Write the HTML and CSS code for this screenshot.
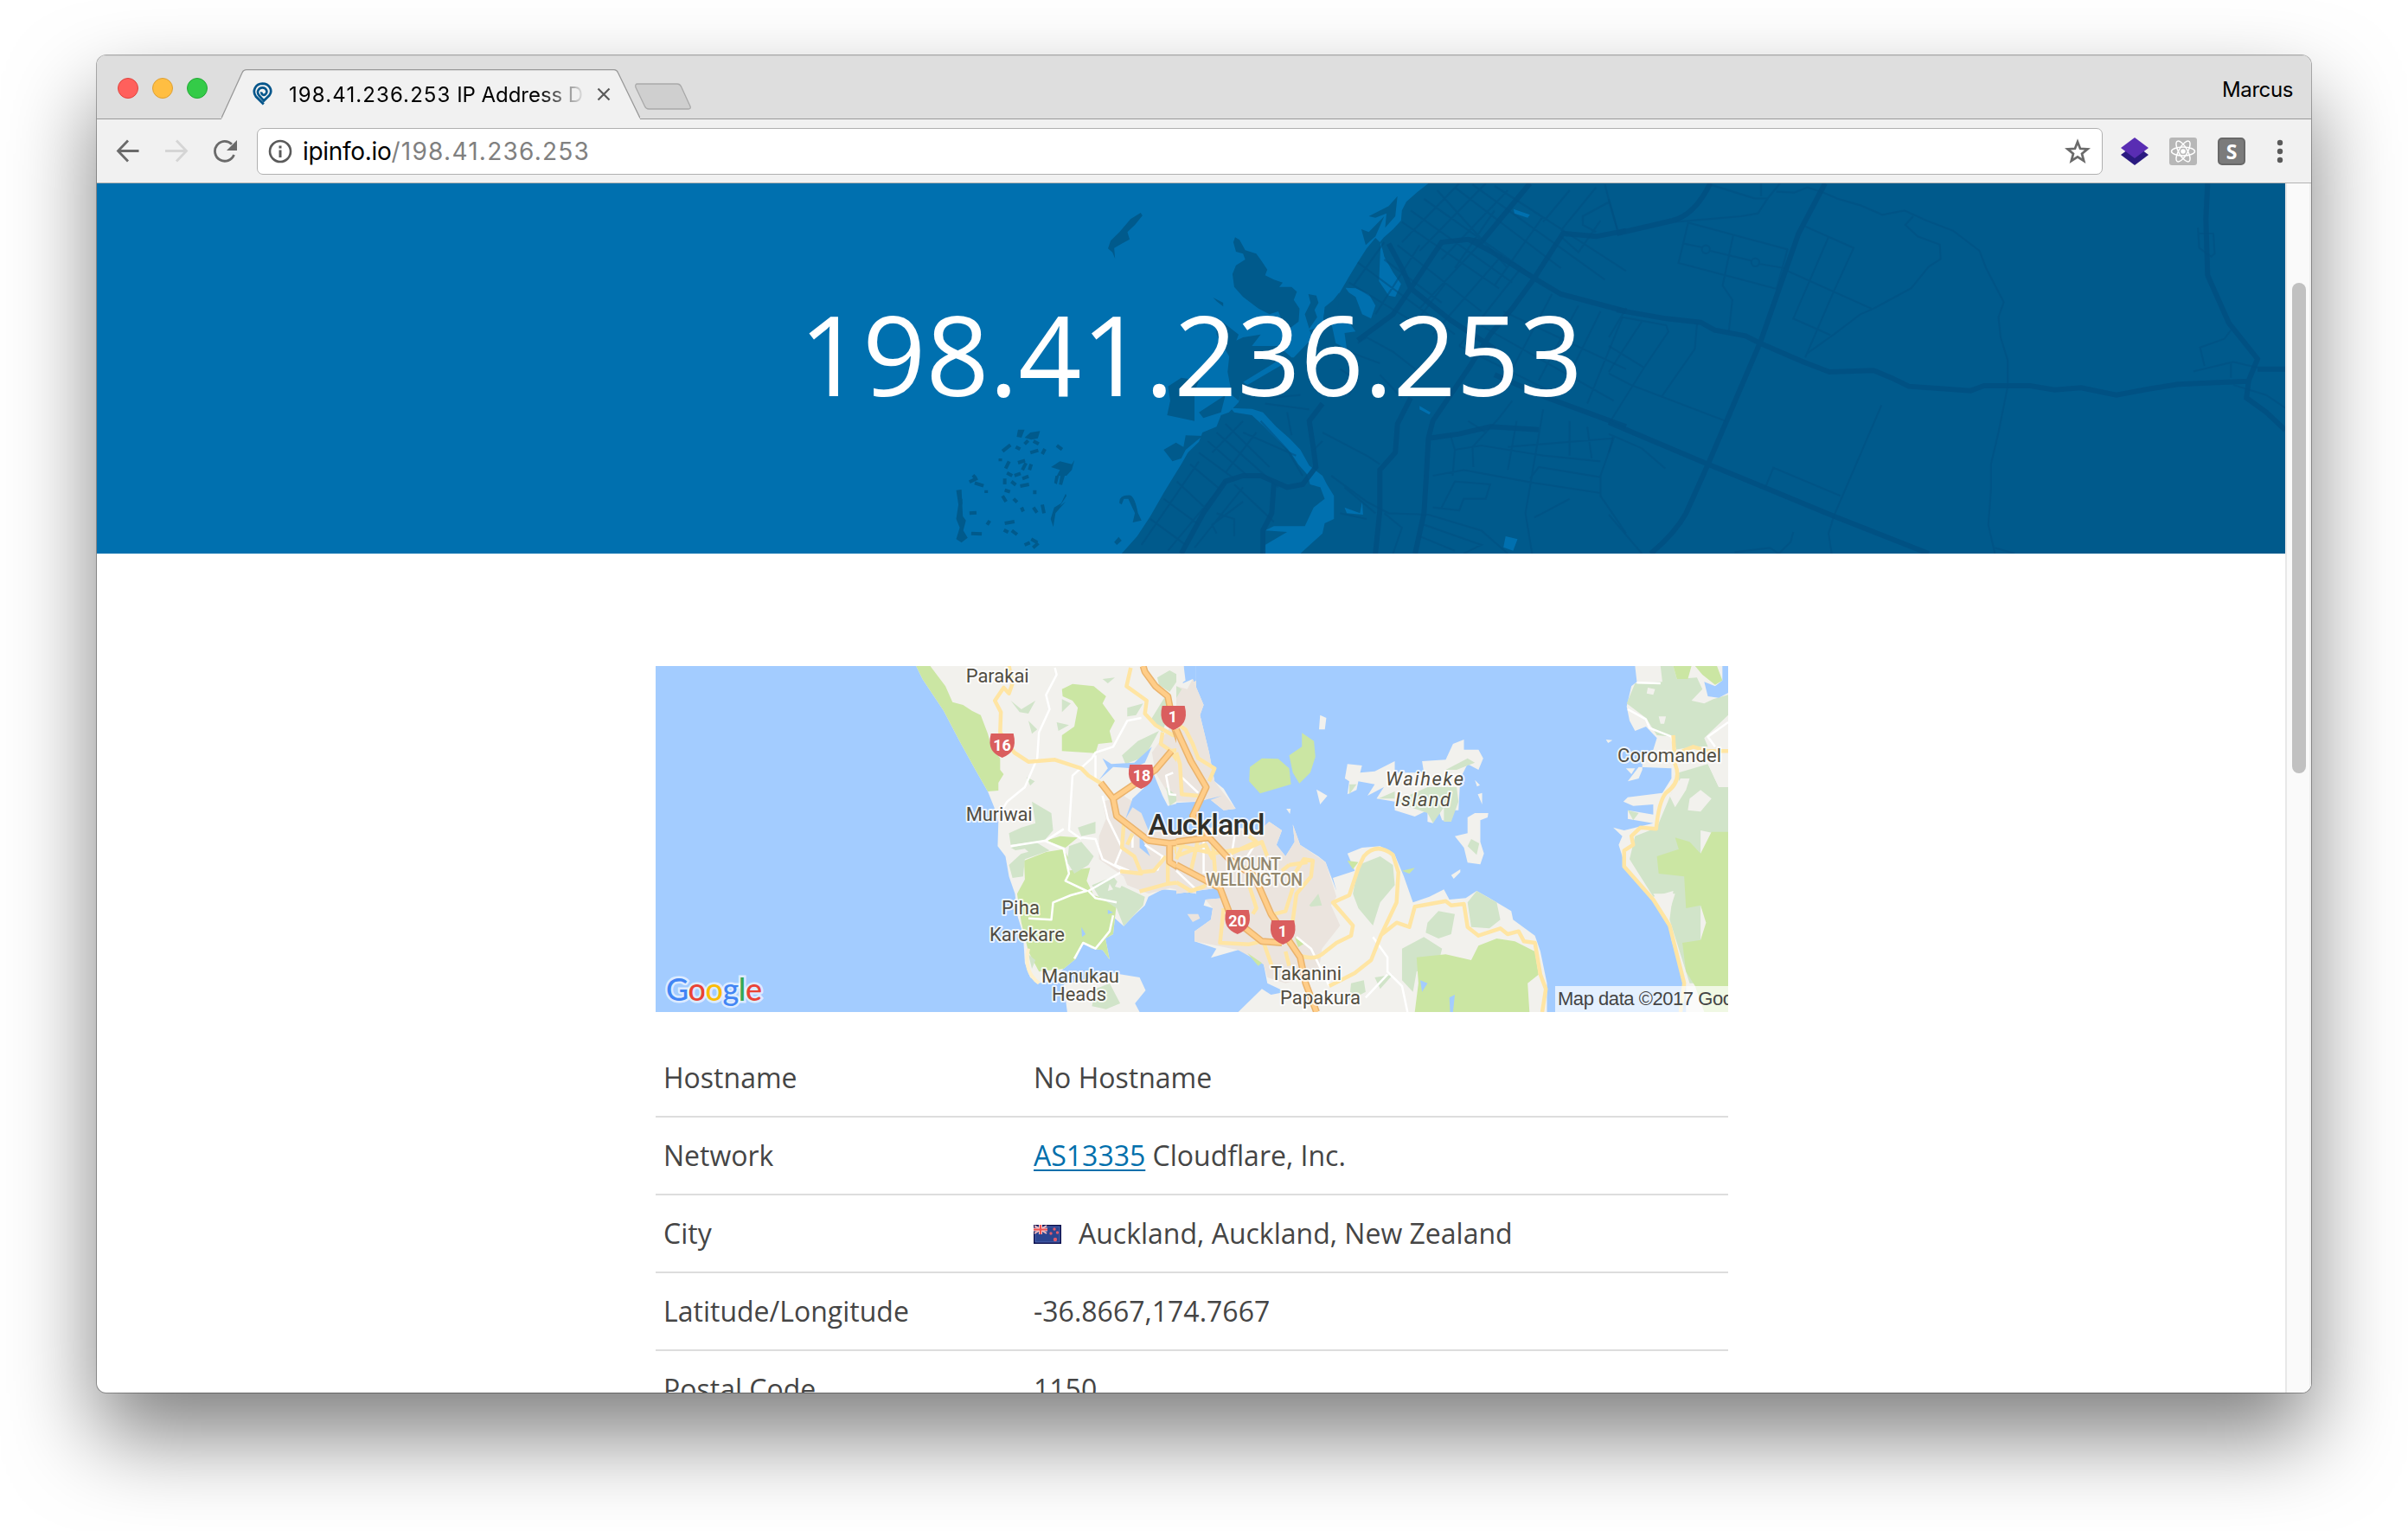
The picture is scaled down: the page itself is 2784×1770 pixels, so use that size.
FILE: index.html
```html
<!DOCTYPE html>
<html lang="en">
<head>
<meta charset="utf-8">
<title>198.41.236.253 IP Address Details</title>
<link rel="stylesheet" href="styles.css">
</head>
<body>
<div class="window">
  <header class="tabstrip">
    <div class="lights"><span class="light red"></span><span class="light amber"></span><span class="light green"></span></div>
    <div class="tab">
      <svg class="tab-shape" width="484" height="58" viewBox="0 0 484 58"><path d="M0 57.5 24 4Q25.500 .7 29 .7H454Q457 .7 458.500 4L484 57.500V58H0Z" fill="#f1f1f1"/><path d="M0 56.500 24 4Q25.500 .7 29 .7H454Q457 .7 458.500 4L484 56.500" fill="none" stroke="#999" stroke-width="1.300"/></svg>
      <svg class="favicon" width="24" height="28" viewBox="0 0 24 28" fill="none" stroke="#05568b" stroke-width="2.700"><path d="M12.800 25.500 3.800 16.500C-.6 10.500 3 1.900 11.400 1.700 19.500 1.700 23.600 9.500 19.600 15L13 21.500 7.600 15.500C3.900 10.700 7.500 6.200 11.500 6.300 16 6.400 18 11.500 14.700 14.200 12.700 15.700 9.800 14 10.400 11.400"/></svg>
      <span class="tab-title"><span class="digits">198.41.236.253</span> IP Address D</span>
      <svg class="close" width="16" height="16" viewBox="0 0 16 16"><path d="M1.500 1.500 14.500 14.500M14.500 1.500 1.500 14.500" stroke="#5a5a5a" stroke-width="2.200"/></svg>
    </div>
    <svg class="newtab" width="68" height="34" viewBox="0 0 68 34"><path d="M4 2H50Q53 2 54.500 5L65 28Q66 31 63 31H17Q14 31 12.500 28L2 6Q1 2 4 2Z" fill="#cfcfcf" stroke="#a9a9a9" stroke-width="1.300"/></svg>
    <span class="profile">Marcus</span>
  </header>
  <nav class="toolbar">
    <svg class="nav-icons" width="150" height="32" viewBox="130 158 150 32" fill="none" stroke="#6a6a6a" stroke-width="2.800">
      <path d="M160.500 173.500H137M148 161.500 136.500 173.500 148 185.500"/>
      <path d="M191 173.500H215M204 161.500 215.500 173.500 204 185.500" stroke="#d5d5d5"/>
      <path d="M270.500 178A11.400 11.400 0 1 1 268 165.800"/>
      <path d="M274 161V173H262Z" fill="#6a6a6a" stroke="none"/>
    </svg>
    <div class="omnibox">
      <svg width="28" height="28" viewBox="0 0 28 28"><circle cx="14" cy="14" r="12" fill="none" stroke="#5a5a5a" stroke-width="2.600"/><path d="M12.500 7.500h3v3h-3zM12.500 12.500h3v8.500h-3z" fill="#5a5a5a"/></svg>
      <span class="url"><b>ipinfo.io</b><span class="digits">/198.41.236.253</span></span>
      <svg width="30" height="30" viewBox="0 0 30 30"><path d="M15 4 18 11.800 26.500 12.300 20 17.700 22.200 26 15 21.300 7.800 26 10 17.700 3.500 12.300 12 11.800Z" fill="none" stroke="#6a6a6a" stroke-width="2.700"/></svg>
    </div>
    <div class="extensions">
      <svg width="32" height="32" viewBox="0 0 32 32"><path d="M0 20 16 8 32 20 16 32Z" fill="#2a1a80"/><path d="M0 12 16 0 32 12 16 24Z" fill="#592db3"/></svg>
      <svg width="32" height="32" viewBox="0 0 32 32"><rect width="32" height="32" rx="3" fill="#b7b7b7"/><g fill="none" stroke="#fff" stroke-width="1.500"><ellipse cx="16" cy="16" rx="13.500" ry="5"/><ellipse cx="16" cy="16" rx="13.500" ry="5" transform="rotate(60 16 16)"/><ellipse cx="16" cy="16" rx="13.500" ry="5" transform="rotate(120 16 16)"/></g><circle cx="16" cy="16" r="2.800" fill="#fff"/></svg>
      <span class="ext-s">S</span>
      <svg width="8" height="28" viewBox="0 0 8 28" fill="#5a5a5a"><circle cx="4" cy="4" r="3.200"/><circle cx="4" cy="14" r="3.200"/><circle cx="4" cy="24" r="3.200"/></svg>
    </div>
  </nav>
  <div class="viewport">
    <main class="page">
      <section class="hero">
        <svg class="hero-map" viewBox="112 212 2530 428" width="2530" height="428">
          <g transform="matrix(.5102 0 0 .33333 1080 200)">
            <path d="M1120 36 1095 66 1070 100 1060 130 1058 165 1040 195 1018 225 1010 240 1000 225 980 262 960 310 940 360 925 400 918 418 905 440 885 475 880 530 850 545 860 570 840 600 815 640 800 640 775 660 750 690 720 725 700 735 690 795 668 830 650 840 640 880 608 900 600 932 575 970 560 1010 540 1060 520 1110 490 1190 460 1260 425 1320H3100V36Z" fill="#005a8c"/>
            <path fill="#005a8c" d="M468 138 472 148 455 180 438 205 443 230 425 245 408 260 410 297 404 275 394 262 400 235 420 205 445 160ZM682 223 692 232 705 268 730 280 742 305 755 335 750 355 770 370 790 380 782 395 810 395 822 412 815 440 828 470 826 515 805 540 790 520 780 480 760 490 735 470 700 430 680 395 676 350 684 320 705 300 700 280 684 273 678 240ZM632 432 655 450 655 463 640 445ZM848 420 866 425 871 450 862 475 868 500 850 540 840 490 853 450ZM918 415 905 440 885 465 880 540 895 520 915 470ZM1050 80 1045 150 1022 190 1025 140 1000 155 985 150 1030 115ZM968 195 985 205 1020 150 1000 220 978 250ZM530 740 560 710 600 720 590 760 590 860 528 840 535 790ZM672 590 700 570 740 560 720 600 780 600 810 640 730 715 700 740 690 790 675 770 665 690ZM640 500 690 560 670 640 640 560ZM548 935 565 950 570 910 608 912 570 960 560 990 540 1000 520 960ZM600 830 660 770 650 830 610 850ZM420 1145 Q418 1115 445 1118 Q455 1125 462 1180 L470 1205 450 1212 455 1180 440 1130 430 1130 425 1150ZM408 1280 418 1262 425 1275 414 1290ZM50 1100 62 1098 65 1190 72 1205 66 1240 76 1265 62 1282 50 1270 58 1230 50 1200 55 1150ZM187 915 190 890 205 890 198 918ZM205 918 218 900 240 895 235 920 220 925ZM265 1020 285 1000 312 1010 318 995 312 1030 300 1050 278 1050 285 1030ZM275 1050 283 1050 278 1080 272 1075ZM286 1050 296 1050 290 1082 283 1080ZM298 1112 300 1120 285 1155 298 1140 275 1180 270 1228 264 1200 272 1160 288 1145Z"/>
            <path d="M155 965l18-22M185 950l10 8M205 940l8-12M225 930l12 10M218 970l18-8M245 975l6-18M278 945l12 14M170 1000l-8 25M190 1005l16-8M200 1030l8-24M220 1010l-4 20M165 1040l12 10M182 1050l14-8M150 1000v-10M80 1072l18-14M88 1048l6 10M92 1075l20 10M118 1100v10M160 1060v20M175 1070l10 12M200 1060l14-8M215 1080l-20 6M160 1100l12 6M155 1120l8 20M180 1130l8 12M198 1160l4 14M228 1100v14M225 1160l8 18M245 1150l4 30M80 1180l16-2M84 1250l24 2M120 1220l6-14M160 1215l22-6M158 1238l10 8M176 1240l12 14M205 1290l12-8M220 1270l14 12M224 1300l12-16M60 1130v20" fill="none" stroke="#005a8c" stroke-width="4" vector-effect="non-scaling-stroke"/>
            <g fill="#0070af"><path d="M1012 240 1020 290 1040 345 1058 385 1045 430 1030 425 1008 375ZM932 398 955 400 985 420 1000 460 990 505 970 490 955 430 940 415ZM900 520 930 495 955 550 930 555 935 610 910 590ZM672 815 720 818 745 830 775 880 805 920 830 960 850 1015 880 1050 890 1080 906 1120 906 1200 885 1215 880 1250 855 1285 830 1320 745 1320 750 1290 800 1245 750 1240 770 1225 840 1225 860 1160 885 1130 875 1090 852 1080 845 1045 825 1010 808 970 780 930 745 875 720 840 680 830ZM700 725 780 650 800 655 710 735ZM1313 125 1350 145 1345 155 1315 140ZM1100 808 1125 830 1122 838 1100 820ZM1295 1260 1322 1270 1312 1310 1290 1298ZM930 1160 965 1180 970 1140 972 1185 935 1180Z"/></g>
            <g class="streets minor"><path d="M1140 60 1300 330M1180 50 1420 330M1220 40 1520 370M1270 45 1568 340M1110 90 1350 350M1080 130 1310 380M1060 170 1280 400M1050 250 1240 480M1020 300 1150 450M960 310 1180 560M940 380 1090 520M1190 36 1060 240M1250 36 1100 270M1300 60 1150 300M1240 240 1100 470M1290 280 1130 560M1330 330 1190 600M1270 130 1180 330M1380 150 1270 390M1440 60 1380 170M1500 50 1420 200M1020 240 950 390M1100 250 1000 490M1160 380 1090 520M1400 420 1310 680M1460 460 1370 720M1510 480 1420 760M1560 500 1480 800M1290 480 1568 680M1240 530 1540 790M1190 600 1400 760M1420 220 1460 275 1510 165M1520 40 1530 100 1470 150 1470 180 1500 205M1530 100 1548 195M960 590 980 570 1040 620 1090 680M940 620 1010 660M920 680 960 720 940 770M1010 700 1060 780M880 900 980 980 1010 1010M860 960 880 930M1380 820 1340 1180 1355 1320M1320 860 1300 1030M1250 900 1280 850 1310 790M1210 860 1250 900 1220 950 1222 1020M1170 910 1180 960 1175 1050M1180 960 1240 945 1380 980 1510 1000M1300 950 1540 920 1510 1050 1510 1120 1568 1250M1350 1060 1370 1020 1510 1055M1440 860 1440 980M1480 880 1490 990M1130 1050 1200 1030 1360 1075 1510 1110M1130 1160 1190 1170 1200 1130 1250 1130 1260 1080 1180 1070 1150 1160M1360 1195 1440 1130M900 1050 980 1140 1030 1180 1120 1185 1240 1240 1300 1320M1110 1220 1240 1290 1200 1320M1100 1260 1180 1310M930 1090 1000 1180M920 1180 980 1200M1020 1180 1060 1230 1040 1320M660 870 760 1020M640 900 780 1090M620 930 710 1050M600 970 680 1060M580 1010 650 1100M550 1070 620 1170M520 1130 600 1220M490 1200 570 1290M740 860 800 960 835 1050M700 860 630 970M730 900 660 1040M800 830 810 910M750 800 850 820M760 780 830 770M700 900 820 980M680 1080 770 1210M700 1140 630 1220 640 1250M640 1180 680 1200 680 1260M600 1000 470 1290M660 1070 530 1310M700 1090 590 1300"/></g>
            <g class="streets major"><path d="M1350 36 1240 240 1210 230 1150 240 1080 400 1040 490 960 580M1210 230 1260 270 1360 365 1420 420 1568 480M1030 245 1060 330 1080 400 1170 510 1270 610M1360 365 1310 470 1260 560 1210 680 1170 770 1130 860 1120 920 1115 1060 1110 1180 1090 1320M1568 200 1500 220 1425 210 1360 365M1270 700 1390 780 1568 880M1080 780 1050 870 1045 970 1010 1030 1010 1170 1000 1320M880 800 850 860 860 960 865 1020 835 1080 800 1090 740 1050 700 1050 660 1070 610 1180 560 1320M770 1075 765 1180 745 1240 745 1320M1120 920 1190 905 1260 880 1370 890"/></g>
          </g>
          <g transform="matrix(.5102 0 0 .33333 1860 200)">
            <g class="streets major"><path d="M18 210 145 165Q195 145 230 36M18 475 130 505 208 518 240 545 310 565 345 592 440 655 500 690 600 685 640 710 680 740 820 755 850 738 955 738 1010 752 1070 745 1150 770 1220 750 1290 733 1450 722M490 36 430 210 345 580 225 1010 175 1180Q150 1250 95 1320M0 865 225 1010 510 1190 725 1320M1357 36 1353 160 1357 355 1405 520 1470 645 1450 720 1445 780 1490 830 1533 892M1470 680H1533"/></g>
            <g class="streets minor"><path d="M230 40 330 88 360 88 388 36M345 36V80M360 88 338 140 300 150 150 170M380 65 420 68 450 50 482 65 520 90 570 112 620 145 670 130 720 165 780 200 840 270 855 330 895 448 883 500 888 570 904 650 904 740 883 900 866 1010 866 1100 860 1220 875 1320M690 150 672 180 700 220 750 248 752 298 725 325 685 400 600 470 570 490 510 560 450 625M445 185 555 260 510 410 445 640M498 222 418 505 502 562M405 340 595 470M180 172 405 265 380 402 158 312ZM282 215 258 390 280 440 272 550M170 245 212 258M230 270 325 305M340 315 398 330M0 90 20 200M40 468 0 570M75 515 0 690M30 500 130 528 135 550 80 675 0 870M200 520 195 610 120 775M0 600 80 675M0 695 50 735 265 860M0 905 75 955 128 1025M10 910 0 970M0 1185 75 1320M618 805 510 1190 498 1250 505 1320M355 1090 373 1022 525 1120M285 1315 365 1300 385 1320 412 1280 418 1245M875 1300 920 1320M1335 190 1338 260 1365 290 1373 280 1370 210 1338 210M1410 545 1395 575 1340 605 1350 670M1325 688 1415 655 1470 675M1410 660V710M1415 735 1490 770 1533 815"/><ellipse cx="220" cy="265" rx="9" ry="14"/><ellipse cx="332" cy="310" rx="9" ry="14"/></g>
          </g>
        </svg>
        <h1>198.41.236.253</h1>
      </section>
      <section class="details">
        <svg class="location-map" width="1240" height="400" viewBox="758 770 1240 400">
          <rect x="758" y="770" width="1240" height="400" fill="#a3ccff"/>
          <g transform="matrix(.40816 0 0 .33333 740 760)">
            <path class="land" d="M782 30 800 75 860 185 905 290 950 390 985 465 1003 520 1015 570 1013 655 1035 690 1045 760 1062 820 1070 900 1085 960 1090 1060 1105 1110 1130 1130 1165 1120 1200 1080 1235 1045 1255 990 1280 1010 1310 1015 1330 1048 1318 975 1340 960 1345 905 1370 932 1395 900 1430 860 1440 830 1480 805 1530 810 1575 820V30ZM1200 1135 1340 1095 1415 1110 1432 1155 1402 1200 1415 1230H1210Z"/>
            <path class="town" d="M1568 90 1535 130 1530 200 1490 260 1450 330 1460 400 1500 480H1575V70ZM1370 480 1310 500 1320 560 1300 620 1300 700 1370 760 1380 790 1440 820 1500 800 1575 820V570L1420 520Z"/>
            <path class="park" d="M782 30H822L865 100 885 155 915 165 940 185 965 200 985 265 995 310 1020 350 1020 390 1030 405 1015 435 1015 462 985 465 950 390 905 290 860 185 800 75ZM1195 110 1225 92 1285 100 1320 135 1310 160 1345 220 1330 255 1338 295 1298 300 1290 332 1195 325V270L1230 240 1240 175 1225 150 1197 135ZM1150 635 1190 620 1240 625 1205 660ZM1088 705 1150 675 1200 665 1215 700 1210 740 1275 730 1265 775 1285 825 1350 850 1345 905 1340 960 1318 975 1330 1048 1310 1015 1280 1010 1255 990 1235 1045 1200 1080 1130 1090 1100 1020 1080 920 1068 820 1090 770Z"/>
            <path class="bush" d="M1465 70 1500 45 1530 65 1500 120 1470 95ZM1485 140 1505 160 1480 260 1445 220ZM1050 150 1080 180 1120 150 1100 195 1075 190ZM1195 145 1220 160 1195 190ZM1180 225 1215 235 1185 255ZM1100 220 1125 250 1110 265ZM1310 75 1345 70 1325 90ZM1380 175 1425 160 1405 200 1380 205ZM1470 255 1430 345 1375 370 1365 340 1410 290ZM1095 415 1118 430 1105 445ZM1110 500 1165 540 1170 600 1145 635 1050 650 1045 610 1080 590 1120 575ZM1050 660 1120 640 1160 670 1090 700 1085 760 1055 765 1045 720 1080 680ZM1240 590 1290 570 1290 610 1250 620ZM1215 655 1250 640 1285 690 1270 720 1230 750 1210 710ZM1280 790 1340 760 1360 790 1430 830 1425 860 1370 932 1350 870 1300 830ZM1490 450 1530 490 1500 515ZM1290 1150 1330 1130 1360 1200 1320 1220 1280 1210ZM1100 1030 1120 1050 1110 1080Z"/>
            <path class="land" d="M1060 670l30-6 10 10-35 12ZM1355 770l15 10-10 20-15-5ZM1330 785l10 20-15 5Z"/>
            <path class="sea" d="M1520 100 1545 80 1540 30H1575V80L1535 110ZM1455 405 1480 480 1495 515 1575 490V615L1470 600 1440 600 1420 540 1395 520 1375 560 1395 490 1430 450ZM1415 610 1445 690 1415 660ZM1300 425 1325 385 1310 350 1335 370 1400 365 1450 310 1430 365 1395 385 1340 380ZM1325 875 1340 885 1325 890ZM1250 935 1262 960 1252 970Z"/>
            <path class="road-w" d="M1175 36 1180 60 1150 130 1160 180 1130 260 1125 350 1090 450 1040 500 1020 540M1420 210 1380 220 1340 310 1290 330 1280 350 1225 410 1215 600 1250 630M1290 340 1290 430M1050 655 1150 635 1200 595M1145 635 1200 665 1215 750 1205 775 1265 810 1220 825 1170 850 1165 910 1100 905M1250 625 1290 630 1310 700 1370 740 1270 810 1290 835 1350 850M1310 480 1325 560 1365 660 1345 720 1385 740M1340 895 1330 950 1290 1010 1255 990 1230 1045M1510 400 1490 410 1500 475 1540 480M1395 620 1395 660M1430 650 1480 690 1465 740"/>
            <path d="M1100 1010Q1085 1090 1130 1130" fill="none" stroke="#fff0cd" stroke-width="4" vector-effect="non-scaling-stroke"/>
            <path class="road-y" d="M1045 30 1055 90 1045 125 1030 105 1005 150 1022 190 1020 260 1060 330 1100 362 1175 355 1250 385 1270 410 1310 440M1390 36 1378 100 1435 150 1430 195 1460 235 1510 270 1540 260 1560 300M1480 260 1475 300 1505 325 1550 315M1505 330 1530 370 1535 475 1570 480M1370 580 1365 660 1400 690 1420 750 1360 742M1420 745 1455 740 1490 690M1380 650 1395 610M1495 700 1495 785 1415 812M1495 785 1530 780 1550 810 1575 805M1500 640 1568 740M1515 680 1575 640"/>
            <path class="motorway-edge" d="M1425 30 1430 50 1460 100 1495 135 1510 230 1530 300 1575 400M1505 325 1460 390 1340 490M1305 435 1340 490 1350 550 1440 635 1500 645 1575 635M1500 645 1500 710 1575 765"/>
            <path class="motorway" d="M1425 30 1430 50 1460 100 1495 135 1510 230 1530 300 1575 400M1505 325 1460 390 1340 490M1305 435 1340 490 1350 550 1440 635 1500 645 1575 635M1500 645 1500 710 1575 765"/>
          </g>
          <g transform="matrix(.42091 0 0 .33333 1360 760)">
            <path class="land" d="M0 30H20L18 90 45 75 75 165 65 200 90 330 105 430 130 455 163 525 130 530 90 490 70 500 40 530 0 500ZM0 590H170L230 600 255 570 290 600 275 650 300 690 325 640 320 580 340 650 390 690 410 710 440 810 430 765 490 740 470 680 510 660 560 655 600 685 625 760 650 850 695 830 735 805 750 840 795 835 825 810 860 835 920 880 925 910 985 965 1000 1020 1018 1130V1230H170L235 1150 260 1170 300 1160 250 1130 240 1065 215 1040 170 1015 95 1042 110 1010 50 985 50 950 95 910 100 870 75 860 80 840 130 835 110 800 0 820ZM1260 30 1265 85 1250 100 1237 170 1245 220 1260 255 1290 240 1320 280 1310 320 1280 350 1280 390 1270 420 1240 430 1270 380 1360 385 1360 420 1335 470 1240 485 1228 500 1255 515 1310 510 1310 545 1240 530 1240 560 1310 575 1230 600 1200 590 1225 620 1215 650 1235 730 1310 840 1355 930 1360 980 1385 1080 1400 1140V1230H1520V30Z"/>
            <path class="town" d="M0 100 30 110 45 75 75 165 65 200 90 330 105 430 163 525 130 530 90 490 60 500H0ZM0 600H170L230 600 255 570 290 600 275 650 300 690 325 640 320 580 340 650 410 710 440 830 425 860 450 930 400 1010 390 1100 300 1130 250 1110 240 1065 170 1015 50 985 50 950 95 910 100 870 80 840 130 835 110 800 0 820ZM30 890 60 890 65 905 45 918Z"/>
            <path class="bush" d="M1262 30H1330L1335 85 1260 90 1237 160 1290 210 1320 270 1365 275 1370 320 1420 310 1460 310 1450 280 1516 200V130L1475 145 1450 160 1415 150 1445 110 1430 70 1375 75 1365 30ZM1516 430 1490 450 1460 370 1380 400 1380 440 1360 470 1330 560 1320 590 1260 620 1245 700 1265 740 1310 830 1365 810 1355 910 1390 1050 1410 1130H1440V600L1516 620ZM500 720 560 690 595 720 600 790 560 850 540 930 500 870 485 820ZM690 920 720 880 765 890 755 960 720 975 685 955ZM800 850 825 810 880 850 890 910 860 940 810 935ZM620 1010 680 970 730 1010 720 1060 660 1090 650 1160 620 1120ZM480 1130 515 1120 520 1160 475 1190ZM545 1110 595 1100 560 1150ZM365 860 390 820 400 860 370 865ZM0 100 15 110 0 140Z"/>
            <path class="land" d="M1410 490 1440 460 1470 490 1440 535 1405 530ZM1460 370 1490 330 1516 340V450H1490ZM1385 420 1410 420 1400 460 1370 520 1355 480ZM1295 105l20 5-5 20-18-5ZM1325 205l20 0-5 25-10 0ZM1310 820 1370 820 1355 880 1335 870Z"/>
            <path class="park" d="M1365 30H1415L1405 75 1375 75ZM1425 30H1485L1500 80 1480 95 1445 60ZM1516 605 1470 605 1440 680 1410 640 1370 625 1380 665 1320 690 1325 750 1395 760 1400 870 1440 860 1455 920 1440 980 1390 990 1400 1090 1425 1140 1450 1230H1516ZM660 1040 740 1030 810 1050 830 1000 880 975 930 985 985 1020 995 1100 965 1130 970 1230H655L665 1130ZM235 350 280 352 310 385 315 440 230 472 200 430 202 380ZM345 262 378 290 382 345 368 400 338 437 320 400 310 340 345 310ZM470 705 500 710 485 735ZM620 740 655 730 640 750ZM325 970 355 990 335 1005ZM195 1025 235 1060 225 1070Z"/>
            <path class="land" d="M395 200 412 210 408 250 392 250ZM385 458 415 480 395 510ZM302 525l12 0-2 18ZM470 370 510 375 505 400 545 395 600 360 600 400 680 400 675 360 740 355 760 300 790 285 790 320 830 320 843 350 830 390 800 370 780 420 775 530 750 530 755 570 730 565 720 530 705 575 690 570V530L655 552 600 530 600 500 550 490 570 450 525 480 545 440 500 430 495 460 470 475 475 430 463 420ZM820 425l14 18-8 5ZM828 475l12-5 0 40ZM800 555 820 540 857 540 855 555 835 565V640L845 680 835 718 800 712 790 660 765 620 800 610ZM755 755 780 735 780 745 762 768ZM1180 285l18 2-12 10ZM1235 385l25 0-10 20Z"/>
            <path class="bush" d="M740 390 800 350 820 365 770 390ZM690 450 770 450 775 500 755 570H735V520L705 575 690 540 600 500ZM810 630 832 645 825 685 800 655ZM555 490 600 465 600 490ZM475 440 495 440 475 475ZM1240 530 1270 540 1255 565Z"/>
            <path class="sea" d="M1450 85 1480 100 1500 80V30H1520V120L1490 140 1460 135ZM125 480 60 510 40 550 70 610 0 610V505L60 500ZM750 1180 765 1170 760 1230H752ZM670 1120 690 1130 675 1160Z"/>
            <path class="road-w" d="M1330 90 1265 88M1240 180 1290 215 1300 245 1360 275 1370 320M1516 225 1460 275 1480 310M330 970 370 1010 420 1140M540 970 580 1040 580 1090 620 1140 635 1230M580 1100 520 1180M75 630V750M190 700 220 640M150 700 160 620M10 410 60 470M0 740 50 800"/>
            <path class="road-y" d="M0 230 25 250 45 300 60 350 105 385 90 430M0 330 10 370 15 475 60 480M0 650 100 680 200 660 235 640 250 690M0 690 80 650 100 700M20 640 0 700M60 630 40 740M100 640 110 800M150 680 220 640 200 620M0 780 40 810 75 795 110 760M200 790 220 870 210 890M310 720 290 740M310 780 350 700 375 705 370 760 330 820 310 1000M310 720 360 710M320 800 300 880 270 890M130 870 120 990 200 995 235 985M240 990 265 1080M300 1020 310 1070M340 1035Q380 1050 400 1030L440 990 480 965 485 930 430 850 475 825 500 730 515 690Q550 640 595 685L610 745 605 850 560 970 535 1050 490 1095 420 1140M560 965 605 920 640 935 655 865 740 845 755 860 790 855 800 935 830 965 890 940 910 960 940 950 955 985 985 990 1000 1100 1015 1150 1005 1230M1365 270 1370 370Q1390 430 1345 470 1325 500 1318 595L1275 590 1250 620 1255 650 1230 670 1230 725 1310 840 1355 930 1395 1130 1385 1230M1390 325 1420 310 1460 325 1516 325"/>
            <path class="motorway-edge" d="M0 250 40 360 82 450 45 550 90 625 145 700 215 760 260 890 340 1040 355 1130 385 1230M0 640 90 625M0 720 120 800 150 900 235 985 290 990"/>
            <path class="motorway" d="M0 250 40 360 82 450 45 550 90 625 145 700 215 760 260 890 340 1040 355 1130 385 1230M0 640 90 625M0 720 120 800 150 900 235 985 290 990"/>
          </g>
          <g class="shields">
            <path id="shield" d="M-13-14H13Q16-2 12 5 8 11 0 14-8 11-12 5-16-2-13-14Z" transform="translate(1356.700 830)"/>
            <use href="#shield" x="-198" y="32"/><use href="#shield" x="-37.500" y="68"/><use href="#shield" x="74" y="236"/><use href="#shield" x="126.500" y="248"/>
            <g class="shield-text"><text x="1356" y="835">1</text><text x="1158.500" y="868">16</text><text x="1320" y="903">18</text><text x="1430.500" y="1071">20</text><text x="1483" y="1083">1</text></g>
          </g>
          <g class="places">
            <text x="1116.700" y="789" textLength="73">Parakai</text><text x="1116.700" y="949" textLength="77">Muriwai</text><text x="1158" y="1057" textLength="44">Piha</text><text x="1144" y="1087.500" textLength="87">Karekare</text><text x="1204" y="1135.500" textLength="90">Manukau</text><text x="1216" y="1157" textLength="63">Heads</text>
            <text x="1870" y="881" textLength="120">Coromandel</text><text x="1469" y="1133" textLength="82">Takanini</text><text x="1480" y="1161" textLength="93">Papakura</text>
            <text class="island" x="1602" y="908" textLength="90">Waiheke</text><text class="island" x="1613" y="932" textLength="64">Island</text>
            <text class="suburb" x="1418" y="1006" textLength="63">MOUNT</text><text class="suburb" x="1394" y="1024" textLength="112">WELLINGTON</text>
            <text class="city" x="1327.500" y="964.500" textLength="135">Auckland</text>
          </g>
          <text class="google" x="770" y="1157" textLength="111"><tspan fill="#4285f4">G</tspan><tspan fill="#ea4335">o</tspan><tspan fill="#fbbc05">o</tspan><tspan fill="#4285f4">g</tspan><tspan fill="#34a853">l</tspan><tspan fill="#ea4335">e</tspan></text>
          <rect x="1798" y="1140" width="200" height="30" fill="#fff" fill-opacity=".7"/>
          <text class="credit" x="1801" y="1162" textLength="203">Map data ©2017 Goo</text>
        </svg>
        <dl class="facts">
          <div class="row"><dt>Hostname</dt><dd>No Hostname</dd></div>
          <div class="row"><dt>Network</dt><dd><a href="#">AS13335</a> Cloudflare, Inc.</dd></div>
          <div class="row"><dt>City</dt><dd><svg class="flag" width="32" height="22" viewBox="0 0 32 22"><rect width="32" height="22" fill="#0b0f4d"/><rect x="2" y="2" width="28" height="18" fill="#2c4590" stroke="#5069b2"/><path d="M1 1 15 10M15 1 1 10" stroke="#f1b9bd" stroke-width="2"/><path d="M8 0V11M0 5.500H16" stroke="#f4c9cc" stroke-width="4"/><path d="M8 0V11M0 5.500H16" stroke="#ef5350" stroke-width="2"/><g fill="#e15b6b"><circle cx="24" cy="5" r="1.700"/><circle cx="20" cy="10" r="1.700"/><circle cx="27.500" cy="9" r="1.700"/><circle cx="25" cy="17" r="2.200"/></g></svg>Auckland, Auckland, New Zealand</dd></div>
          <div class="row"><dt>Latitude/Longitude</dt><dd>-36.8667,174.7667</dd></div>
          <div class="row"><dt>Postal Code</dt><dd>1150</dd></div>
        </dl>
      </section>
    </main>
    <div class="scrollbar"><div class="thumb"></div></div>
  </div>
</div>
</body>
</html>
```

FILE: styles.css
```css
* { box-sizing: border-box; }
body { margin: 0; padding: 64px 112px; height: 1770px; overflow: hidden; background: #fff; }
.window { display: flex; flex-direction: column; width: 2560px; height: 1546px; overflow: hidden; border-radius: 11px; background: #fff; box-shadow: 0 0 0 1px rgba(0,0,0,.3), 0 50px 100px rgba(0,0,0,.5); }

.tabstrip { display: flex; align-items: flex-end; height: 74px; flex: none; background: #dedede; border-bottom: 1px solid #999; box-shadow: inset 0 1px #d0d0d0; font-family: Inter, "Liberation Sans", sans-serif; color: #000; }
.lights { display: flex; gap: 16px; padding-left: 24px; width: 144px; margin-bottom: 23px; }
.light { width: 24px; height: 24px; border-radius: 50%; border: 1px solid #e0443e; }
.red { background: #ff605c; }
.amber { background: #ffbe42; border-color: #dda035; }
.green { background: #34cb48; border-color: #24a936; }
.tab { position: relative; display: flex; align-items: center; width: 484px; height: 58px; margin-bottom: -1px; padding-left: 36px; }
.tab-shape { position: absolute; left: 0; top: 0; }
.favicon { position: relative; flex: none; }
.tab-title { position: relative; width: 344px; margin: 2px 0 0 18px; overflow: hidden; white-space: nowrap; font-size: 24px; line-height: 32px; letter-spacing: -.05px; -webkit-mask-image: linear-gradient(90deg, #000 84%, transparent); mask-image: linear-gradient(90deg, #000 84%, transparent); }
.tab-title .digits { letter-spacing: 1.1px; }
.close { position: relative; margin-left: 12px; }
.newtab { margin: 0 0 8px -7px; }
.profile { margin: 0 21px 17px auto; font-size: 24px; line-height: 32px; letter-spacing: -.4px; }

.toolbar { display: flex; align-items: center; height: 74px; flex: none; padding-left: 18px; background: #f1f1f1; border-bottom: 1px solid #b2b2b2; }
.nav-icons { flex: none; }
.omnibox { display: flex; align-items: center; width: 2134px; height: 54px; margin-left: 17px; padding: 0 13px 0 12px; border: 1px solid #b0b0b0; border-radius: 7px; background: #fff; }
.url { flex: 1; padding-left: 12px; font: 28px/36px Inter, "Liberation Sans", sans-serif; letter-spacing: -.3px; color: #808080; }
.url b { font-weight: 400; color: #000; }
.url .digits { letter-spacing: 1.25px; }
.extensions { display: flex; align-items: center; gap: 24px; margin-left: 21px; }
.ext-s { width: 32px; height: 32px; border-radius: 5px; background: #7b7b7b; border: 2px solid #686868; color: #fff; font: 700 23px/28px "Open Sans", sans-serif; text-align: center; }
.extensions svg:last-child { margin-left: 12px; }

.viewport { display: flex; flex: 1; min-height: 0; }
.page { width: 2530px; overflow: hidden; }
.scrollbar { width: 30px; padding: 115px 6px 0; background: #fafafa; border-left: 2px solid #e8e8e8; border-right: 2px solid #eee; }
.thumb { width: 16px; height: 567px; border-radius: 8px; background: #c1c1c1; }
.hero { display: grid; height: 428px; background: #0070af; }
.hero > * { grid-area: 1 / 1; }
.hero h1 { position: relative; margin: 23px 0 0; font: 400 128px/348px "Open Sans", sans-serif; text-align: center; color: #fff; }
.streets { fill: none; stroke: #005082; }
.streets > * { vector-effect: non-scaling-stroke; }
.minor { stroke-width: 2.2; opacity: .55; }
.major { stroke-width: 6; opacity: .85; }

.details { width: 1240px; margin: 130px 0 0 646px; }
.location-map { display: block; }
.land { fill: #f2f1ed; }
.town { fill: #ebe4de; }
.park { fill: #cbe6a3; }
.bush { fill: #d1e4c9; }
.sea { fill: #a3ccff; }
.road-w, .road-y, .motorway, .motorway-edge { fill: none; stroke-linejoin: round; vector-effect: non-scaling-stroke; }
.road-w { stroke: #fff; stroke-width: 2.5; }
.road-y { stroke: #ffe5a3; stroke-width: 4.5; }
.motorway-edge { stroke: #eab36c; stroke-width: 8; }
.motorway { stroke: #ffcd88; stroke-width: 5; }
.shields { fill: #da5e5e; }
.shield-text { fill: #fff; font: 700 18px Roboto, sans-serif; text-anchor: middle; }
.places { font: 400 22px Roboto, sans-serif; fill: #514d42; stroke: #fff; stroke-opacity: .8; stroke-width: 4px; stroke-linejoin: round; paint-order: stroke; }
.places .island { font-style: italic; }
.places .suburb { font-size: 19.5px; font-weight: 500; fill: #93886f; }
.places .city { font-size: 34px; font-weight: 500; fill: #302f29; }
.google { font: 500 36px Lato, sans-serif; stroke: #fff; stroke-opacity: .65; stroke-width: 5px; paint-order: stroke; }
.credit { font: 22px "Liberation Sans", sans-serif; fill: #444; }

.facts { margin: 32px 0 0; font: 32px/88px "Open Sans", sans-serif; color: #454545; }
.row { display: flex; height: 90px; padding-left: 9px; border-bottom: 2px solid #ddd; }
.row dt { width: 428px; }
.row dd { margin: 0; white-space: nowrap; }
.row a { color: #006fac; text-decoration-thickness: 2px; text-underline-offset: 4px; }
.flag { margin-right: 20px; vertical-align: 0; }
```
